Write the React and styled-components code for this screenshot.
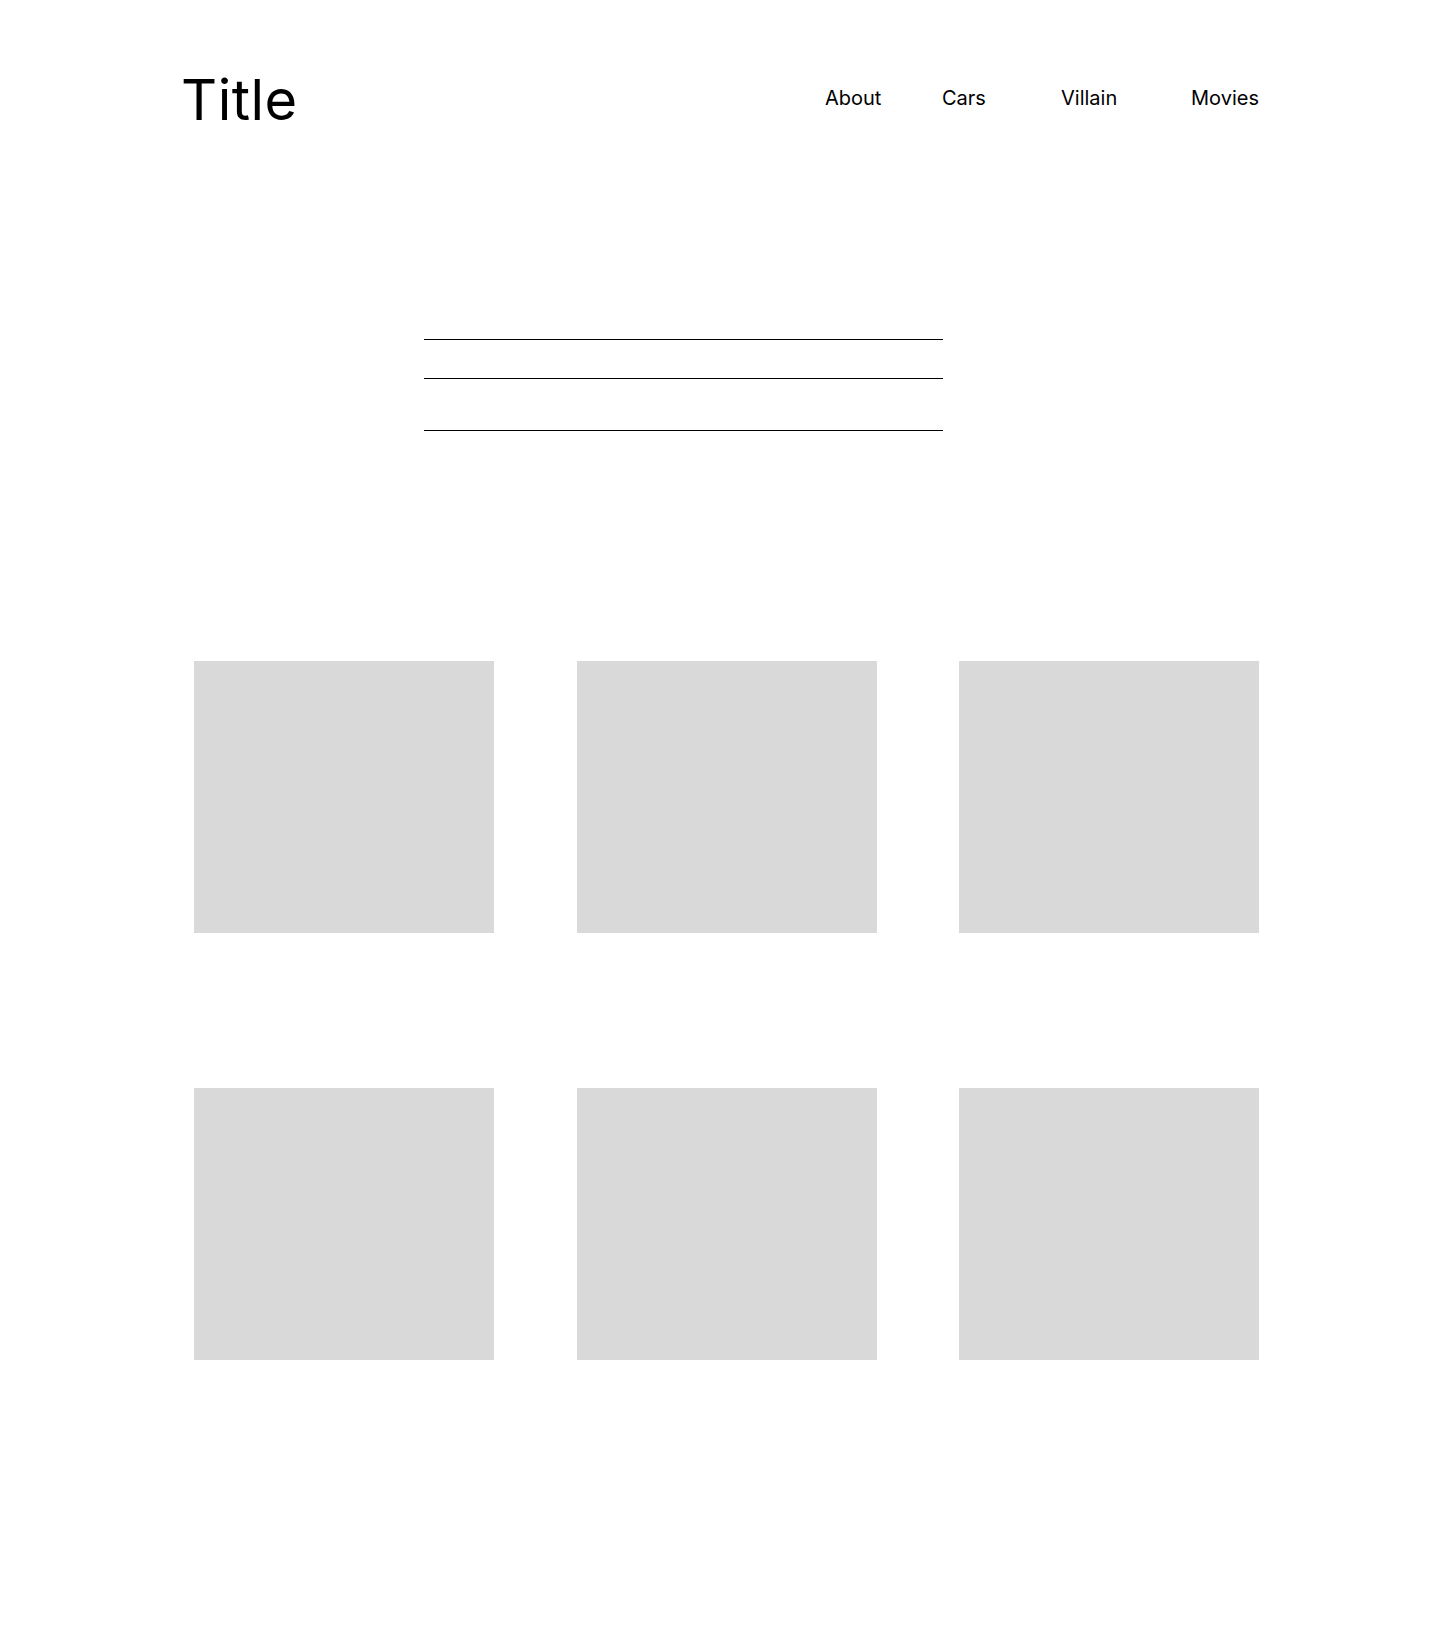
import React from 'react';
import styled, { createGlobalStyle } from 'styled-components';

const GlobalStyle = createGlobalStyle`
    body {
        margin: 0;
        background: #fff;
        font-family: Inter, 'Noto Sans', sans-serif;
        color: #000;
    }
`;

const Page = styled.div`
    width: 1440px;
    min-height: 1636px;
    background: #fff;
    box-sizing: border-box;
    padding-top: 66px;
`;

const Header = styled.header`
    display: flex;
    align-items: flex-start;
    justify-content: space-between;
    padding: 0 184px 0 181px;
`;

const Title = styled.h1`
    margin: 0;
    font-size: 56px;
    font-weight: 400;
    line-height: 68px;
    letter-spacing: 0.5px;
`;

const Nav = styled.nav`
    display: flex;
    padding-top: 20px;
`;

const NavLink = styled.a`
    display: block;
    width: ${props => props.$w}px;
    font-size: 20px;
    line-height: 24px;
    color: #000;
    text-decoration: none;
`;

const Lines = styled.div`
    display: flex;
    flex-direction: column;
    width: 519px;
    margin: 205px 0 0 424px;
`;

const Line = styled.div`
    height: 1px;
    background: #000;
    margin-top: ${props => props.$gap}px;
`;

const Grid = styled.div`
    display: grid;
    grid-template-columns: repeat(3, 300px);
    grid-auto-rows: 272px;
    column-gap: 82.5px;
    row-gap: 155px;
    margin: 230px 0 0 194px;
`;

const Tile = styled.div`
    background: #d9d9d9;
`;

const links = [
    { label: 'About', w: 117 },
    { label: 'Cars', w: 119 },
    { label: 'Villain', w: 130 },
    { label: 'Movies', w: 65 },
];

const App = () => {
    return (
        <Page>
            <GlobalStyle />
            <Header>
                <Title>Title</Title>
                <Nav>
                    {links.map(l => (
                        <NavLink key={l.label} href="#" $w={l.w}>{l.label}</NavLink>
                    ))}
                </Nav>
            </Header>
            <Lines>
                <Line $gap={0} />
                <Line $gap={38} />
                <Line $gap={51} />
            </Lines>
            <Grid>
                {[0, 1, 2, 3, 4, 5].map(i => <Tile key={i} />)}
            </Grid>
        </Page>
    );
};

export default App;
